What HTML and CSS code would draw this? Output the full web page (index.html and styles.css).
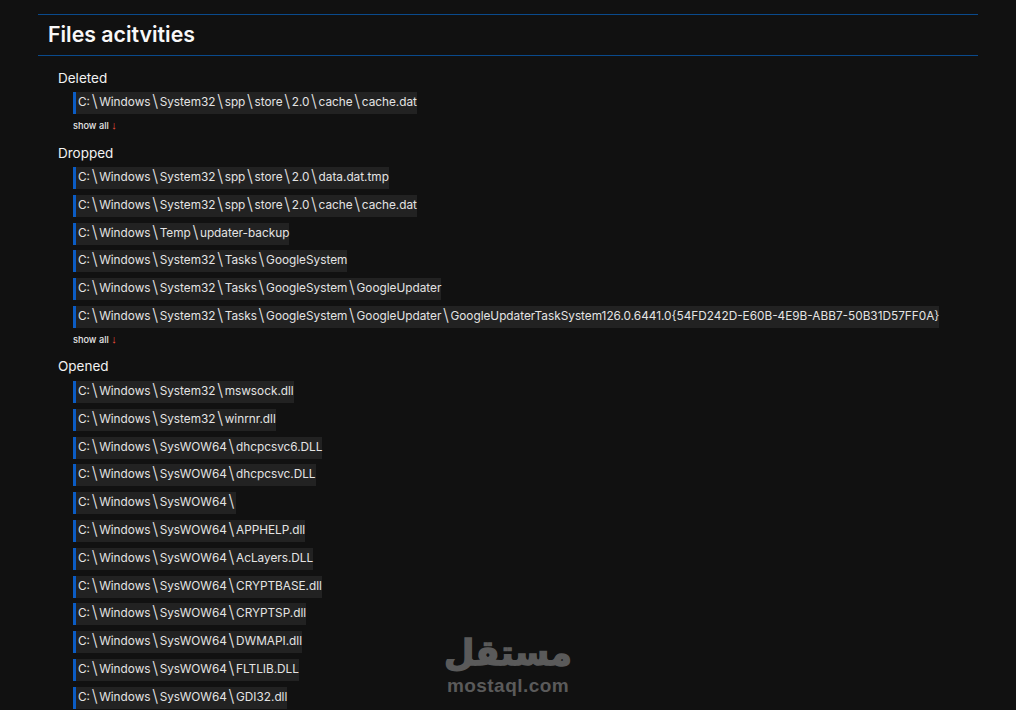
FILE: index.html
```html
<!DOCTYPE html>
<html lang="en">
<head>
<meta charset="utf-8">
<title>Files activities</title>
<link rel="stylesheet" href="styles.css">
</head>
<body>
<main class="panel">
  <h2 class="title">Files acitvities</h2>
  <section class="group">
    <h3 class="group-name">Deleted</h3>
    <ul class="paths">
      <li><code class="path">C:<i>\</i>Windows<i>\</i>System32<i>\</i>spp<i>\</i>store<i>\</i>2.0<i>\</i>cache<i>\</i>cache.dat</code></li>
    </ul>
    <a class="more">show all <span class="arrow">↓</span></a>
  </section>
  <section class="group">
    <h3 class="group-name">Dropped</h3>
    <ul class="paths">
      <li><code class="path">C:<i>\</i>Windows<i>\</i>System32<i>\</i>spp<i>\</i>store<i>\</i>2.0<i>\</i>data.dat.tmp</code></li>
      <li><code class="path">C:<i>\</i>Windows<i>\</i>System32<i>\</i>spp<i>\</i>store<i>\</i>2.0<i>\</i>cache<i>\</i>cache.dat</code></li>
      <li><code class="path">C:<i>\</i>Windows<i>\</i>Temp<i>\</i>updater-backup</code></li>
      <li><code class="path">C:<i>\</i>Windows<i>\</i>System32<i>\</i>Tasks<i>\</i>GoogleSystem</code></li>
      <li><code class="path">C:<i>\</i>Windows<i>\</i>System32<i>\</i>Tasks<i>\</i>GoogleSystem<i>\</i>GoogleUpdater</code></li>
      <li><code class="path">C:<i>\</i>Windows<i>\</i>System32<i>\</i>Tasks<i>\</i>GoogleSystem<i>\</i>GoogleUpdater<i>\</i>GoogleUpdaterTaskSystem126.0.6441.0{54FD242D-E60B-4E9B-ABB7-50B31D57FF0A}</code></li>
    </ul>
    <a class="more">show all <span class="arrow">↓</span></a>
  </section>
  <section class="group">
    <h3 class="group-name">Opened</h3>
    <ul class="paths">
      <li><code class="path">C:<i>\</i>Windows<i>\</i>System32<i>\</i>mswsock.dll</code></li>
      <li><code class="path">C:<i>\</i>Windows<i>\</i>System32<i>\</i>winrnr.dll</code></li>
      <li><code class="path">C:<i>\</i>Windows<i>\</i>SysWOW64<i>\</i>dhcpcsvc6.DLL</code></li>
      <li><code class="path">C:<i>\</i>Windows<i>\</i>SysWOW64<i>\</i>dhcpcsvc.DLL</code></li>
      <li><code class="path">C:<i>\</i>Windows<i>\</i>SysWOW64<i>\</i></code></li>
      <li><code class="path">C:<i>\</i>Windows<i>\</i>SysWOW64<i>\</i>APPHELP.dll</code></li>
      <li><code class="path">C:<i>\</i>Windows<i>\</i>SysWOW64<i>\</i>AcLayers.DLL</code></li>
      <li><code class="path">C:<i>\</i>Windows<i>\</i>SysWOW64<i>\</i>CRYPTBASE.dll</code></li>
      <li><code class="path">C:<i>\</i>Windows<i>\</i>SysWOW64<i>\</i>CRYPTSP.dll</code></li>
      <li><code class="path">C:<i>\</i>Windows<i>\</i>SysWOW64<i>\</i>DWMAPI.dll</code></li>
      <li><code class="path">C:<i>\</i>Windows<i>\</i>SysWOW64<i>\</i>FLTLIB.DLL</code></li>
      <li><code class="path">C:<i>\</i>Windows<i>\</i>SysWOW64<i>\</i>GDI32.dll</code></li>
    </ul>
  </section>
</main>
<div class="watermark">
  <span class="wm-ar" lang="ar" dir="rtl">مستقل</span>
  <span class="wm-en">mostaql.com</span>
</div>
</body>
</html>
```
FILE: styles.css
```css
* { box-sizing: border-box; }
html, body { height: 710px; overflow: hidden; }
body {
  margin: 0;
  padding: 14px 38px 0;
  background: #111111;
  color: #f2f2f2;
  font-family: Inter, "Noto Sans", sans-serif;
}
.title {
  margin: 0 0 10.5px;
  height: 42px;
  padding-left: 10px;
  border-top: 1px solid #0a4a8c;
  border-bottom: 1px solid #0a4a8c;
  font-size: 21.3px;
  font-weight: 600;
  line-height: 39px;
  color: #f8f8f8;
}
.group { padding-left: 20px; margin-bottom: 5.8px; }
.group-name {
  margin: 0;
  font-size: 13.5px;
  font-weight: 400;
  line-height: 22px;
  color: #f2f2f2;
}
.paths {
  list-style: none;
  margin: 0;
  padding: 0 0 0 15px;
}
.paths li { height: 27.8px; padding-top: 1.6px; }
.path {
  display: inline-block;
  height: 22px;
  padding-left: 2px;
  border-left: 3px solid #0b5cc4;
  background: #222222;
  font-family: Inter, "Noto Sans", sans-serif;
  font-size: 11.8px;
  line-height: 20px;
  color: #e4e4e4;
  white-space: nowrap;
}
.path i {
  font-style: normal;
  font-size: 17px;
  font-weight: 300;
  line-height: 0;
  vertical-align: -1px;
  margin: 0 1.6px;
}
.more {
  display: block;
  margin-left: 15px;
  font-size: 9.2px;
  font-weight: 500;
  line-height: 19.4px;
  color: #e6e6e6;
}
.arrow { font-family: "Liberation Sans", sans-serif; color: #f0503a; font-size: 11px; }
.watermark {
  position: absolute;
  left: 430px;
  top: 630px;
  width: 156px;
  display: flex;
  flex-direction: column;
  align-items: center;
  color: #5a5a5a;
  font-weight: 700;
  pointer-events: none;
}
.wm-ar {
  font-family: "DejaVu Sans", sans-serif;
  font-size: 35px;
  line-height: 46px;
  -webkit-text-stroke: 1.5px #5a5a5a;
}
.wm-en { font-family: "Liberation Sans", sans-serif; font-size: 19px; line-height: 20px; letter-spacing: 0.45px; }
```
